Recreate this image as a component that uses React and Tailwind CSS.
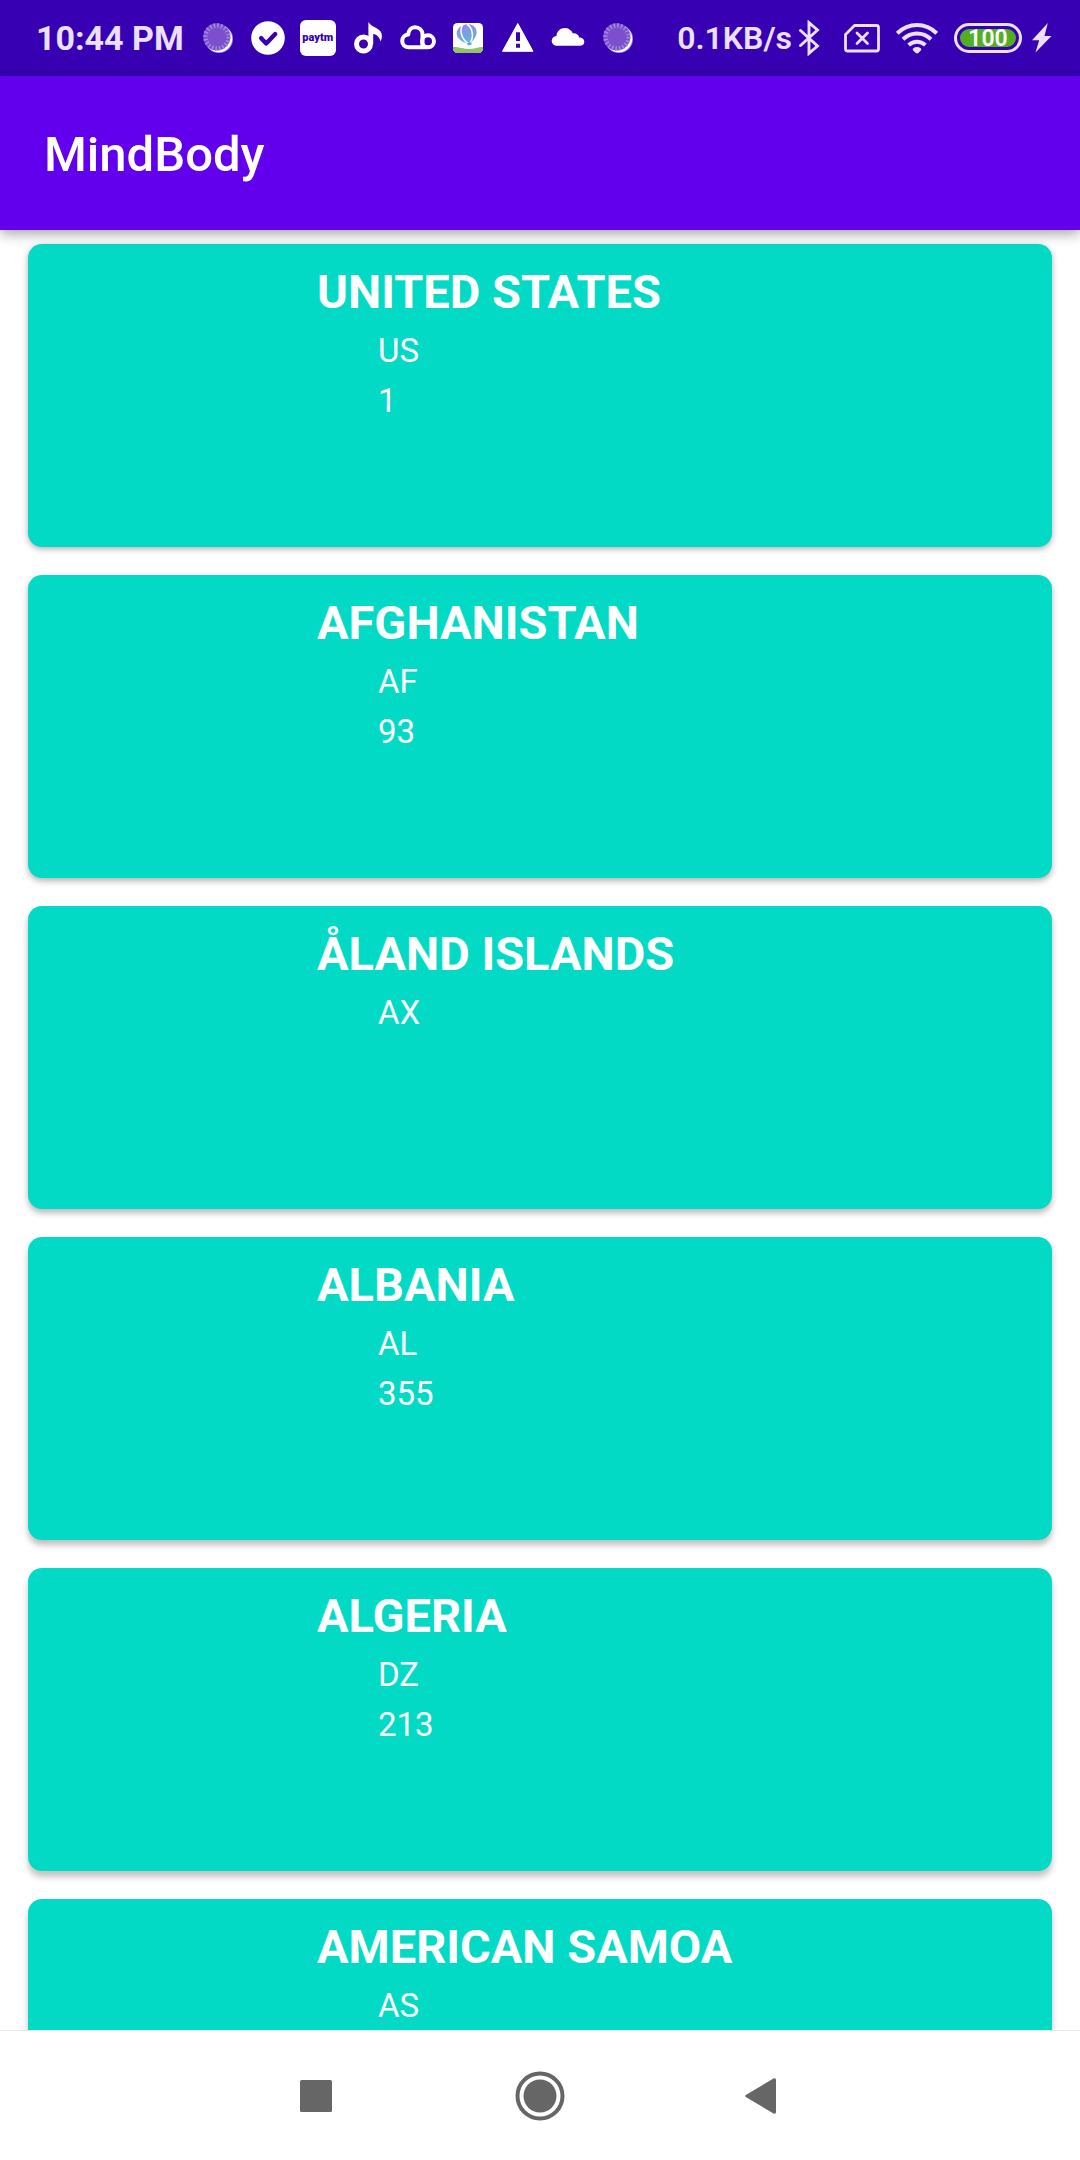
const countries = [
  { name: "UNITED STATES", code: "US", dial: "1", shadow: "shadow-[0_2px_6px_rgba(0,0,0,0.32)]" },
  { name: "AFGHANISTAN", code: "AF", dial: "93", shadow: "shadow-[0_3px_6px_rgba(0,0,0,0.3)]" },
  { name: "ÅLAND ISLANDS", code: "AX", dial: "", shadow: "shadow-[0_4px_6px_rgba(0,0,0,0.28)]" },
  { name: "ALBANIA", code: "AL", dial: "355", shadow: "shadow-[0_5px_6px_rgba(0,0,0,0.26)]" },
  { name: "ALGERIA", code: "DZ", dial: "213", shadow: "shadow-[0_6px_6px_rgba(0,0,0,0.24)]" },
  { name: "AMERICAN SAMOA", code: "AS", dial: "", shadow: "shadow-[0_6px_6px_rgba(0,0,0,0.24)]" },
];

function Icon({ children }) {
  return (
    <svg viewBox="0 0 36 36" className="size-9 shrink-0" aria-hidden="true">
      {children}
    </svg>
  );
}

function DialIcon() {
  return (
    <Icon>
      <circle cx="19" cy="19" r="14" fill="#9c86dc" />
      <circle cx="18.6" cy="18.6" r="13.6" fill="#fff" />
      <circle cx="16.8" cy="16.8" r="13.6" fill="#7c50cc" />
      <circle cx="17" cy="17" r="11.6" fill="none" stroke="#a78be0" strokeWidth="4.4" strokeDasharray="1.5 2.14" />
    </Icon>
  );
}

function CheckIcon() {
  return (
    <Icon>
      <circle cx="18" cy="18" r="16.8" fill="#fff" />
      <path d="M11.2 18.2l5 5.2 9-9.4" fill="none" stroke="#3700b3" strokeWidth="4.4" strokeLinecap="round" strokeLinejoin="round" />
    </Icon>
  );
}

function MusicIcon() {
  return (
    <Icon>
      <circle cx="13.5" cy="24" r="7" fill="none" stroke="#fff" strokeWidth="5" />
      <path d="M18.4 2c1.8 3 4.600 4.300 7.400 5.800 4 2.200 6.200 4.700 6.100 8.200 0 2.200-.6 4-1.500 5.600-.6-4.200-3.400-7-7.200-7.600V24l-4.800-1z" fill="#fff" />
    </Icon>
  );
}

function CloudLinkIcon() {
  return (
    <Icon>
      <path d="M27 27.300H9C5 27.300 2.200 24.600 2.200 21c0-3.400 2.500-6 6-6.400C8.500 10.200 11 7.200 15 7.200c4.200 0 7.300 3 7.500 7V27" fill="none" stroke="#fff" strokeWidth="4" strokeLinejoin="round" />
      <circle cx="28" cy="21.300" r="6" fill="none" stroke="#fff" strokeWidth="4" />
    </Icon>
  );
}

function BalloonIcon() {
  return (
    <Icon>
      <defs>
        <linearGradient id="balloon" x1="0" y1="0" x2="0" y2="1">
          <stop offset="0" stopColor="#8f8fe0" />
          <stop offset="1" stopColor="#62b4e2" />
        </linearGradient>
        <clipPath id="tile">
          <rect x="3" y="3" width="30" height="30" rx="4.500" />
        </clipPath>
      </defs>
      <g clipPath="url(#tile)">
        <rect x="3" y="3" width="30" height="30" fill="#fff" />
        <path d="M3 27C10 27 14 29 19 29S28 27 33 27V33H3z" fill="#93c464" />
      </g>
      <g transform="rotate(-14 17 14)">
        <path d="M14.500 23C9.500 19.500 7 16.500 7 12.500 7 8 11 4.500 17 4.500s10 3.500 10 8c0 4-2.500 7-7.500 10.500z" fill="url(#balloon)" />
        <path d="M14.800 4.500c-4.600 4-4.300 13 .8 18.500M19.200 4.500c4.600 4 4.300 13-.8 18.500" fill="none" stroke="#fff" strokeWidth="1.500" />
        <path d="M14.600 23h4.800l-.6 2.500h-3.600z" fill="#55aee0" />
      </g>
    </Icon>
  );
}

function WarningIcon() {
  return (
    <Icon>
      <path d="M17.800 3.500L33 31.300H2.500z" fill="#fff" stroke="#fff" strokeWidth="1" strokeLinejoin="round" />
      <path d="M16 12.300h4V21h-4zM16 23.700h4v4h-4z" fill="#3700b3" />
    </Icon>
  );
}

function CloudIcon() {
  return (
    <Icon>
      <path d="M7 25.800c-3 0-5.300-2.200-5.300-5 0-2.600 2-4.700 4.700-4.900C6.800 11.300 10.300 8 14.800 8c3.700 0 6.600 2 8 5.200 3.400-.3 5.800 1.600 6.500 4.300 3 .1 5 1.800 5 4.200 0 2.400-1.800 4.100-4.500 4.100z" fill="#fff" />
    </Icon>
  );
}

function BluetoothIcon() {
  return (
    <svg viewBox="0 0 30 36" className="h-9 w-[30px] shrink-0" aria-hidden="true">
      <path d="M2.500 10.500l17 15.500-8.500 7.300V2.700L19.500 10l-17 15.500" fill="none" stroke="#ebe0ff" strokeWidth="2.900" strokeLinejoin="miter" strokeLinecap="round" />
    </svg>
  );
}

function SimIcon() {
  return (
    <Icon>
      <path d="M10.500 5.500H32.500q2 0 2 2V29q0 2-2 2H3.500q-2 0-2-2V14.500z" fill="none" stroke="#ebe0ff" strokeWidth="2.800" strokeLinejoin="round" />
      <path d="M13 13l10.500 10.500M23.500 13L13 23.500" stroke="#ebe0ff" strokeWidth="2.800" strokeLinecap="round" />
    </Icon>
  );
}

function WifiIcon() {
  return (
    <svg viewBox="0 0 42 36" className="h-9 w-[42px] shrink-0" aria-hidden="true">
      <g fill="none" stroke="#ebe0ff" strokeWidth="4">
        <path d="M1.300 13.300C12.500 2.300 29.500 2.300 40.700 13.300" />
        <path d="M7 19.300c8.200-7.600 19.800-7.600 28 0" />
        <path d="M12.600 25c5-4.400 11.800-4.400 16.800 0" />
      </g>
      <path d="M17 28.500q4-2.800 8 0 .6 1-.2 1.900L22.300 33q-1.300.8-2.600 0l-2.500-2.600q-.8-.9-.2-1.900z" fill="#ebe0ff" />
    </svg>
  );
}

function BoltIcon() {
  return (
    <svg viewBox="0 0 20 36" className="h-9 w-5 shrink-0" aria-hidden="true">
      <path d="M15.800 3L0 20.300h7.200L3.500 32.500 19.500 16h-7z" fill="#ebe0ff" />
    </svg>
  );
}

function StatusBar() {
  return (
    <div className="flex h-19 shrink-0 items-center justify-between bg-[#3700b3] pr-7 pl-9 leading-10 text-[#ebe0ff]">
      <div className="flex items-center gap-4">
        <span className="text-[34px] font-bold whitespace-nowrap">10:44 PM</span>
        <div className="flex items-center gap-3.5">
          <DialIcon />
          <CheckIcon />
          <span className="flex size-9 items-center justify-center rounded-md bg-white pb-0.5 text-[11px] leading-none font-black text-[#3700b3]">
            paytm
          </span>
          <MusicIcon />
          <CloudLinkIcon />
          <BalloonIcon />
          <WarningIcon />
          <CloudIcon />
          <DialIcon />
        </div>
      </div>
      <div className="flex items-center gap-4">
        <div className="flex items-center gap-1.5">
          <span className="text-[32px] font-semibold whitespace-nowrap">0.1KB/s</span>
          <BluetoothIcon />
        </div>
        <SimIcon />
        <WifiIcon />
        <div className="flex items-center gap-2.5">
          <div className="h-[30px] w-[68px] rounded-full border-3 border-[#ebe0ff] p-[3px]">
            <div className="flex h-full items-center justify-center rounded-full bg-[#52ae22] text-[23px] leading-none font-semibold text-white">
              100
            </div>
          </div>
          <BoltIcon />
        </div>
      </div>
    </div>
  );
}

function CountryCard({ name, code, dial, shadow }) {
  return (
    <li className={`h-[303px] shrink-0 rounded-[14px] bg-[#03dac5] pt-5 pl-[289px] text-white ${shadow}`}>
      <h2 className="text-[47px] leading-14 font-bold">{name}</h2>
      <div className="mt-1.5 pl-[61px] text-[33px] leading-[50px]">
        <p>{code}</p>
        {dial && <p>{dial}</p>}
      </div>
    </li>
  );
}

function NavButton({ label, children }) {
  return (
    <button type="button" aria-label={label} className="flex h-full w-56 items-center justify-center">
      <svg viewBox="0 0 50 50" className="size-[50px]" fill="#666" aria-hidden="true">
        {children}
      </svg>
    </button>
  );
}

export default function App() {
  return (
    <div className="flex h-screen flex-col bg-white font-[Roboto,sans-serif]">
      <StatusBar />
      <header className="z-10 flex h-[154px] shrink-0 items-center bg-[#6200ee] px-11 pt-1 shadow-[0_4px_12px_rgba(0,0,0,0.35)]">
        <h1 className="text-[49px] leading-14 font-medium text-white">MindBody</h1>
      </header>
      <main className="min-h-0 flex-1 overflow-y-auto [scrollbar-width:none]">
        <ul className="flex flex-col gap-7 px-7 py-3.5">
          {countries.map((country) => (
            <CountryCard key={country.code} {...country} />
          ))}
        </ul>
      </main>
      <nav className="flex h-[130px] shrink-0 justify-center border-t border-gray-200 bg-white">
        <NavButton label="Recent apps">
          <rect x="9" y="9" width="32" height="32" rx="1.500" />
        </NavButton>
        <NavButton label="Home">
          <circle cx="25" cy="25" r="22.500" fill="none" stroke="#666" strokeWidth="4" />
          <circle cx="25" cy="25" r="16.500" />
        </NavButton>
        <NavButton label="Back">
          <path d="M6.800 24L34.500 7.500q2.500-1 2.500 1.500v32q0 2.500-2.500 1.500L6.800 26q-1.400-1 0-2z" />
        </NavButton>
      </nav>
    </div>
  );
}
